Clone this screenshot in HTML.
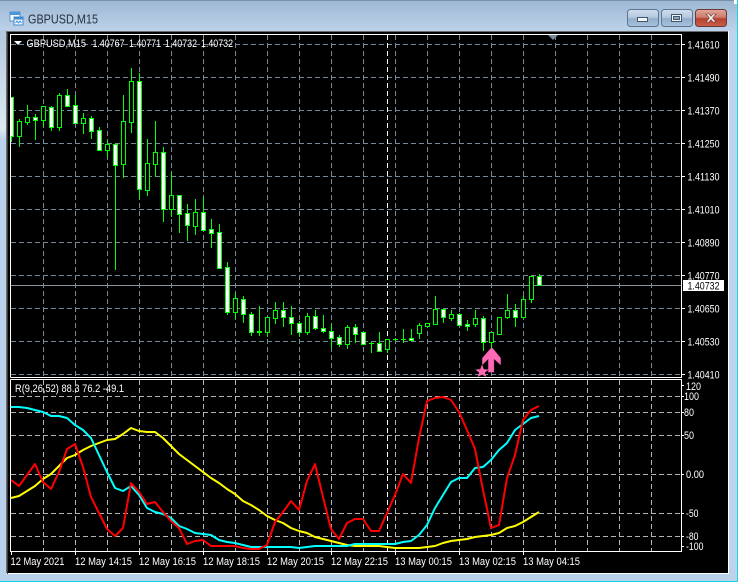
<!DOCTYPE html>
<html><head><meta charset="utf-8"><title>GBPUSD,M15</title>
<style>
html,body{margin:0;padding:0;width:739px;height:582px;overflow:hidden;background:#fff}
svg{display:block;position:absolute;left:0;top:0}
text{font-family:"Liberation Sans",sans-serif;font-size:11px;fill:#fff}
.g{stroke:#778899;stroke-width:1;stroke-dasharray:5 3;fill:none}
.s{stroke:#b4b4b4;stroke-width:1;stroke-dasharray:5 3;fill:none}
.p{stroke:#fff;stroke-width:1;stroke-dasharray:5 3;fill:none}
.l{fill:none;stroke-width:2;stroke-linejoin:round}
.c{shape-rendering:crispEdges}
</style></head><body>
<svg width="739" height="582" viewBox="0 0 739 582" xmlns="http://www.w3.org/2000/svg">
<defs>
<linearGradient id="tb" x1="0" y1="0" x2="0" y2="1"><stop offset="0" stop-color="#9db7d3"/><stop offset="1" stop-color="#bdd3ea"/></linearGradient>
<linearGradient id="ls" x1="0" y1="0" x2="0" y2="1"><stop offset="0" stop-color="#b3c8de"/><stop offset=".18" stop-color="#dde8f3"/><stop offset=".2" stop-color="#b9d1ea"/><stop offset="1" stop-color="#b9d1ea"/></linearGradient>
<linearGradient id="bt" x1="0" y1="0" x2="0" y2="1"><stop offset="0" stop-color="#d0deee"/><stop offset=".45" stop-color="#b5c9df"/><stop offset=".55" stop-color="#93aecb"/><stop offset="1" stop-color="#a9c3de"/></linearGradient>
<linearGradient id="cl" x1="0" y1="0" x2="0" y2="1"><stop offset="0" stop-color="#e0a79c"/><stop offset=".45" stop-color="#cf7c6c"/><stop offset=".55" stop-color="#b5412e"/><stop offset="1" stop-color="#c8614c"/></linearGradient>
</defs>

<!-- window frame -->
<rect x="0" y="0" width="737" height="581" fill="#b9d1ea"/>
<rect x="0" y="0" width="737" height="32" fill="url(#tb)"/>
<rect x="0" y="30" width="7" height="551" fill="url(#ls)"/>
<rect x="729" y="30" width="8" height="551" fill="#bcd3eb"/>
<path d="M0 .5H734" stroke="#7c90a8" fill="none"/>
<path d="M737.5 0V581.5H0" stroke="#19d3e6" fill="none"/>
<rect x="734" y="0" width="3" height="4" fill="#fff"/>

<!-- title icon -->
<rect x="10" y="12" width="10" height="9" fill="#fff" stroke="#4b94d8"/>
<rect x="10" y="12" width="10" height="3" fill="#4b94d8"/>
<rect x="14" y="17" width="9" height="8" fill="#eef5fc" stroke="#3d8ad2"/>
<rect x="14" y="17" width="9" height="2.5" fill="#3d8ad2"/>
<path d="M15.5 23l1.5-2 1.5 2 1.5-2 1.5 2" stroke="#3d8ad2" fill="none" stroke-width=".9"/>
<text x="28" y="23.5" style="font-size:12.5px;fill:#26323f" textLength="70" lengthAdjust="spacingAndGlyphs">GBPUSD,M15</text>

<!-- buttons -->
<rect x="627.5" y="9.5" width="31" height="17" rx="3" fill="url(#bt)" stroke="#5f7690"/>
<rect x="637.5" y="17.5" width="10" height="4" fill="#f4f7fa" stroke="#44566c"/>
<rect x="661.5" y="9.5" width="31" height="17" rx="3" fill="url(#bt)" stroke="#5f7690"/>
<rect x="671.5" y="14.5" width="10" height="7" fill="#485a70" stroke="#44566c"/>
<rect x="672.5" y="15.5" width="8" height="5" fill="none" stroke="#f0f4f8" stroke-width="1"/>
<rect x="674" y="17" width="5" height="2" fill="#8ca3bb"/>
<rect x="695.5" y="9.5" width="31" height="17" rx="3" fill="url(#cl)" stroke="#6b3a36"/>
<path d="M706 14h3l2 2.3 2-2.3h3l-3.4 4 3.4 4h-3l-2-2.3-2 2.3h-3l3.4-4z" fill="#f6f2f0" stroke="#6a3a34" stroke-width=".6"/>

<!-- client -->
<rect x="6" y="31" width="723" height="543" fill="#000"/>
<path d="M6.5 574V31.5H729" stroke="#6b6b6b" fill="none"/>
<path d="M728.5 31V573.5H6" stroke="#fff" fill="none"/>
<path d="M7.5 574V32.5" stroke="#3a3a3a" fill="none"/>

<!-- main grid -->
<path class="g" d="M11 44.5H682M11 77.5H682M11 110.5H682M11 143.5H682M11 176.5H682M11 209.5H682M11 242.5H682M11 275.5H682M11 308.5H682M11 341.5H682M11 374.5H682"/>
<path class="g" d="M43.5 35V377M75.5 35V377M107.5 35V377M139.5 35V377M171.5 35V377M203.5 35V377M235.5 35V377M267.5 35V377M299.5 35V377M331.5 35V377M363.5 35V377M395.5 35V377M427.5 35V377M459.5 35V377M491.5 35V377M523.5 35V377M555.5 35V377M587.5 35V377M619.5 35V377M651.5 35V377"/>
<path class="p" d="M387.5 35V377"/>
<path d="M11 285.5H682" stroke="#8a939c" fill="none"/>

<!-- wicks -->
<path class="c" stroke="#00ff00" fill="none" d="M11.5 97V142M19.5 119V147M27.5 105V125M35.5 114V140M43.5 106V127M51.5 106V131M59.5 93V131M67.5 89V106M75.5 95V123M83.5 113V134M91.5 116V139M99.5 127V151M107.5 140V158M115.5 143V270M123.5 95V178M131.5 68V133M139.5 73V199M147.5 139V196M155.5 121V177M163.5 147V222M171.5 172V217M179.5 195V233M187.5 204V241M195.5 199V235M203.5 197V231M211.5 219V248M219.5 224V268M227.5 262V315M235.5 293V319M243.5 296V323M251.5 312V336M259.5 306V336M267.5 317V337M275.5 302V324M283.5 302V327M291.5 306V335M299.5 321V337M307.5 313V335M315.5 310V330M323.5 315V333M331.5 324V348M339.5 335V347M347.5 325V349M355.5 324V343M363.5 332V345M371.5 342V353M379.5 332V351M387.5 339V353M395.5 338V341M403.5 329V343M411.5 329V340M419.5 323V339M427.5 323V327M435.5 296V325M443.5 309V323M451.5 310V321M459.5 313V325M467.5 320V331M475.5 310V327M483.5 316V351M491.5 332V348M499.5 317V334M507.5 294V319M515.5 304V327M523.5 296V317M531.5 276V303M539.5 274V285"/>
<!-- dojis -->
<path class="c" stroke="#00ff00" fill="none" d="M369 343.5h5M393 339.5h5M401 339.5h5"/>
<!-- hollow bodies -->
<path class="c" fill="#000" stroke="#00ff00" d="M17.5 121.5h4v15h-4zM25.5 117.5h4v5h-4zM41.5 106.5h4v14h-4zM57.5 95.5h4v32h-4zM81.5 118.5h4v5h-4zM105.5 144.5h4v6h-4zM121.5 121.5h4v43h-4zM129.5 81.5h4v41h-4zM145.5 163.5h4v27h-4zM153.5 152.5h4v12h-4zM169.5 195.5h4v14h-4zM193.5 212.5h4v14h-4zM233.5 298.5h4v14h-4zM265.5 317.5h4v15h-4zM273.5 310.5h4v8h-4zM305.5 316.5h4v16h-4zM345.5 327.5h4v17h-4zM385.5 339.5h4v10h-4zM417.5 325.5h4v8h-4zM425.5 323.5h4v3h-4zM433.5 309.5h4v15h-4zM449.5 314.5h4v4h-4zM473.5 318.5h4v6h-4zM489.5 332.5h4v10h-4zM497.5 317.5h4v17h-4zM505.5 310.5h4v7h-4zM521.5 299.5h4v18h-4zM529.5 276.5h4v23h-4z"/>
<!-- filled bodies -->
<path class="c" fill="#fff" stroke="#00ff00" d="M9.5 97.5h4v39h-4zM33.5 117.5h4v3h-4zM49.5 107.5h4v20h-4zM65.5 95.5h4v11h-4zM73.5 105.5h4v18h-4zM89.5 118.5h4v13h-4zM97.5 130.5h4v20h-4zM113.5 144.5h4v21h-4zM137.5 81.5h4v108h-4zM161.5 152.5h4v57h-4zM177.5 195.5h4v19h-4zM185.5 213.5h4v12h-4zM201.5 212.5h4v18h-4zM209.5 229.5h4v4h-4zM217.5 232.5h4v36h-4zM225.5 267.5h4v45h-4zM241.5 299.5h4v15h-4zM249.5 314.5h4v18h-4zM257.5 331.5h4v1h-4zM281.5 310.5h4v7h-4zM289.5 317.5h4v6h-4zM297.5 323.5h4v9h-4zM313.5 316.5h4v12h-4zM321.5 328.5h4v3h-4zM329.5 331.5h4v7h-4zM337.5 337.5h4v7h-4zM353.5 327.5h4v7h-4zM361.5 332.5h4v12h-4zM377.5 343.5h4v8h-4zM409.5 338.5h4v2h-4zM441.5 309.5h4v8h-4zM457.5 314.5h4v11h-4zM465.5 324.5h4v2h-4zM481.5 318.5h4v24h-4zM513.5 310.5h4v7h-4zM537.5 276.5h4v9h-4z"/>

<!-- arrow + star -->
<polygon points="482.3,358 491,348 492.5,348 500.7,358 500.7,365 494,359 494,372.3 488.3,372.3 488.3,359 482.3,365" fill="#ff69b4" stroke="#9b3c8c" stroke-width=".4"/>
<polygon points="482,364.5 483.8,369.3 488.8,369.5 484.9,372.6 486.3,377 482,374.6 477.7,377 479.1,372.6 475.2,369.5 480.2,369.3" fill="#ff69b4"/>

<!-- black strip outside frame for clipping -->
<rect x="8" y="35" width="2" height="340" fill="#000"/>
<rect x="10" y="377" width="672" height="3" fill="#000"/>

<!-- sub grid -->
<path class="s" d="M11 396.5H682M11 412.5H682M11 435.5H682M11 474.5H682M11 513.5H682M11 536.5H682"/>
<path class="s" d="M43.5 380V551M75.5 380V551M107.5 380V551M139.5 380V551M171.5 380V551M203.5 380V551M235.5 380V551M267.5 380V551M299.5 380V551M331.5 380V551M363.5 380V551M395.5 380V551M427.5 380V551M459.5 380V551M491.5 380V551M523.5 380V551M555.5 380V551M587.5 380V551M619.5 380V551M651.5 380V551"/>
<path class="p" d="M387.5 380V551"/>

<!-- indicator lines -->
<polyline class="l" stroke="#ffff00" points="11,498 19,496 27,491 35,486 43,479 51,474 59,466 67,458 75,455 83,450 91,446 99,443 107,440 115,439 123,434 131,428 139,431 147,432 155,432 163,438 171,446 179,454 187,460 195,466 203,472 211,478 219,483 227,489 235,494 243,501 251,505 259,510 267,516 275,520 283,523 291,528 299,531 307,533 315,537 323,539 331,541 339,543 347,545 355,546 363,546 371,546 379,546 387,547 395,548 403,548 411,548 419,548 427,547 435,546 443,543 451,541 459,540 467,539 475,537 483,536 491,535 499,533 507,528 515,526 523,522 531,517 539,512"/>
<polyline class="l" stroke="#00ffff" points="11,407 19,407 27,408 35,410 43,412 51,416 59,416 67,418 75,425 83,430 91,438 99,455 107,472 115,488 123,491 131,486 139,495 147,508 155,512 163,514 171,518 179,526 187,529 195,533 203,534 211,535 219,540 227,542 235,543 243,545 251,547 259,547 267,547 275,547 283,547 291,547 299,548 307,547 315,546 323,546 331,546 339,546 347,546 355,544 363,544 371,544 379,544 387,544 395,544 403,542 411,541 419,535 427,525 435,508 443,495 451,482 459,478 467,478 475,468 483,467 491,460 499,450 507,443 515,430 523,424 531,418 539,416"/>
<polyline class="l" stroke="#ff0000" points="11,480 19,486 27,475 35,464 43,482 51,489 59,472 67,449 75,444 83,467 91,497 99,513 107,529 115,536 123,528 131,483 139,492 147,504 155,502 163,512 171,521 179,528 187,544 195,541 203,540 211,546 219,546 227,546 235,546 243,548 251,549 259,549 267,545 275,522 283,512 291,501 299,510 307,481 315,464 323,497 331,529 339,539 347,523 355,519 363,519 371,531 379,531 387,513 395,495 403,474 411,483 419,438 427,401 435,398 443,397 451,400 459,412 467,430 475,449 483,490 491,528 499,525 507,478 515,455 523,420 531,410 539,406"/>

<!-- frames -->
<path class="c" d="M10.5 377.5V34.5H681.5V377.5H10.5" stroke="#fff" fill="none"/>
<path class="c" d="M10.5 379.5V551.5H681.5V379.5H10.5" stroke="#fff" fill="none"/>
<polygon points="548,35 558,35 553,40" fill="#778899"/>
<polygon points="14,41 22,41 18,45" fill="#fff"/>

<!-- ticks -->
<path class="c" stroke="#fff" fill="none" d="M682 44.5h3M682 77.5h3M682 110.5h3M682 143.5h3M682 176.5h3M682 209.5h3M682 242.5h3M682 275.5h3M682 308.5h3M682 341.5h3M682 374.5h3M682 396.5h2M682 412.5h2M682 435.5h2M682 474.5h2M682 513.5h2M682 536.5h2M682 546.5h2M682 385.5h2M11.5 552v3M75.5 552v3M139.5 552v3M203.5 552v3M267.5 552v3M331.5 552v3M395.5 552v3M459.5 552v3M523.5 552v3"/>

<!-- header -->
<text x="26.5" y="47" textLength="59.5" lengthAdjust="spacingAndGlyphs">GBPUSD,M15</text>
<text x="92.5" y="47" textLength="32" lengthAdjust="spacingAndGlyphs">1.40767</text>
<text x="129" y="47" textLength="32" lengthAdjust="spacingAndGlyphs">1.40771</text>
<text x="165" y="47" textLength="32" lengthAdjust="spacingAndGlyphs">1.40732</text>
<text x="201" y="47" textLength="32" lengthAdjust="spacingAndGlyphs">1.40732</text>
<text x="15" y="392" textLength="109" lengthAdjust="spacingAndGlyphs">R(9,26,52) 88.3 76.2 -49.1</text>

<!-- price axis -->
<text x="687.5" y="48.5" textLength="32" lengthAdjust="spacingAndGlyphs">1.41610</text>
<text x="687.5" y="81.5" textLength="32" lengthAdjust="spacingAndGlyphs">1.41490</text>
<text x="687.5" y="114.5" textLength="32" lengthAdjust="spacingAndGlyphs">1.41370</text>
<text x="687.5" y="147.5" textLength="32" lengthAdjust="spacingAndGlyphs">1.41250</text>
<text x="687.5" y="180.5" textLength="32" lengthAdjust="spacingAndGlyphs">1.41130</text>
<text x="687.5" y="213.5" textLength="32" lengthAdjust="spacingAndGlyphs">1.41010</text>
<text x="687.5" y="246.5" textLength="32" lengthAdjust="spacingAndGlyphs">1.40890</text>
<text x="687.5" y="279.5" textLength="32" lengthAdjust="spacingAndGlyphs">1.40770</text>
<text x="687.5" y="312.5" textLength="32" lengthAdjust="spacingAndGlyphs">1.40650</text>
<text x="687.5" y="345.5" textLength="32" lengthAdjust="spacingAndGlyphs">1.40530</text>
<text x="687.5" y="378.5" textLength="32" lengthAdjust="spacingAndGlyphs">1.40410</text>
<rect x="683" y="280" width="41" height="11" fill="#fff"/>
<text x="687.5" y="289.5" style="fill:#000" textLength="32" lengthAdjust="spacingAndGlyphs">1.40732</text>

<!-- indicator axis -->
<text x="686" y="390" textLength="15" lengthAdjust="spacingAndGlyphs">120</text>
<text x="684" y="400" textLength="15" lengthAdjust="spacingAndGlyphs">100</text>
<text x="684" y="416" textLength="10" lengthAdjust="spacingAndGlyphs">80</text>
<text x="684" y="439" textLength="10" lengthAdjust="spacingAndGlyphs">50</text>
<text x="686" y="478" textLength="18" lengthAdjust="spacingAndGlyphs">0.00</text>
<text x="686" y="517" textLength="12.5" lengthAdjust="spacingAndGlyphs">-50</text>
<text x="686" y="540" textLength="12.5" lengthAdjust="spacingAndGlyphs">-80</text>
<text x="686" y="550" textLength="17.5" lengthAdjust="spacingAndGlyphs">-100</text>

<!-- time axis -->
<text x="10.5" y="565" textLength="54" lengthAdjust="spacingAndGlyphs">12 May 2021</text>
<text x="75" y="565" textLength="57" lengthAdjust="spacingAndGlyphs">12 May 14:15</text>
<text x="139" y="565" textLength="57" lengthAdjust="spacingAndGlyphs">12 May 16:15</text>
<text x="203" y="565" textLength="57" lengthAdjust="spacingAndGlyphs">12 May 18:15</text>
<text x="267" y="565" textLength="57" lengthAdjust="spacingAndGlyphs">12 May 20:15</text>
<text x="331" y="565" textLength="57" lengthAdjust="spacingAndGlyphs">12 May 22:15</text>
<text x="395" y="565" textLength="57" lengthAdjust="spacingAndGlyphs">13 May 00:15</text>
<text x="459" y="565" textLength="57" lengthAdjust="spacingAndGlyphs">13 May 02:15</text>
<text x="523" y="565" textLength="57" lengthAdjust="spacingAndGlyphs">13 May 04:15</text>
</svg>
</body></html>
